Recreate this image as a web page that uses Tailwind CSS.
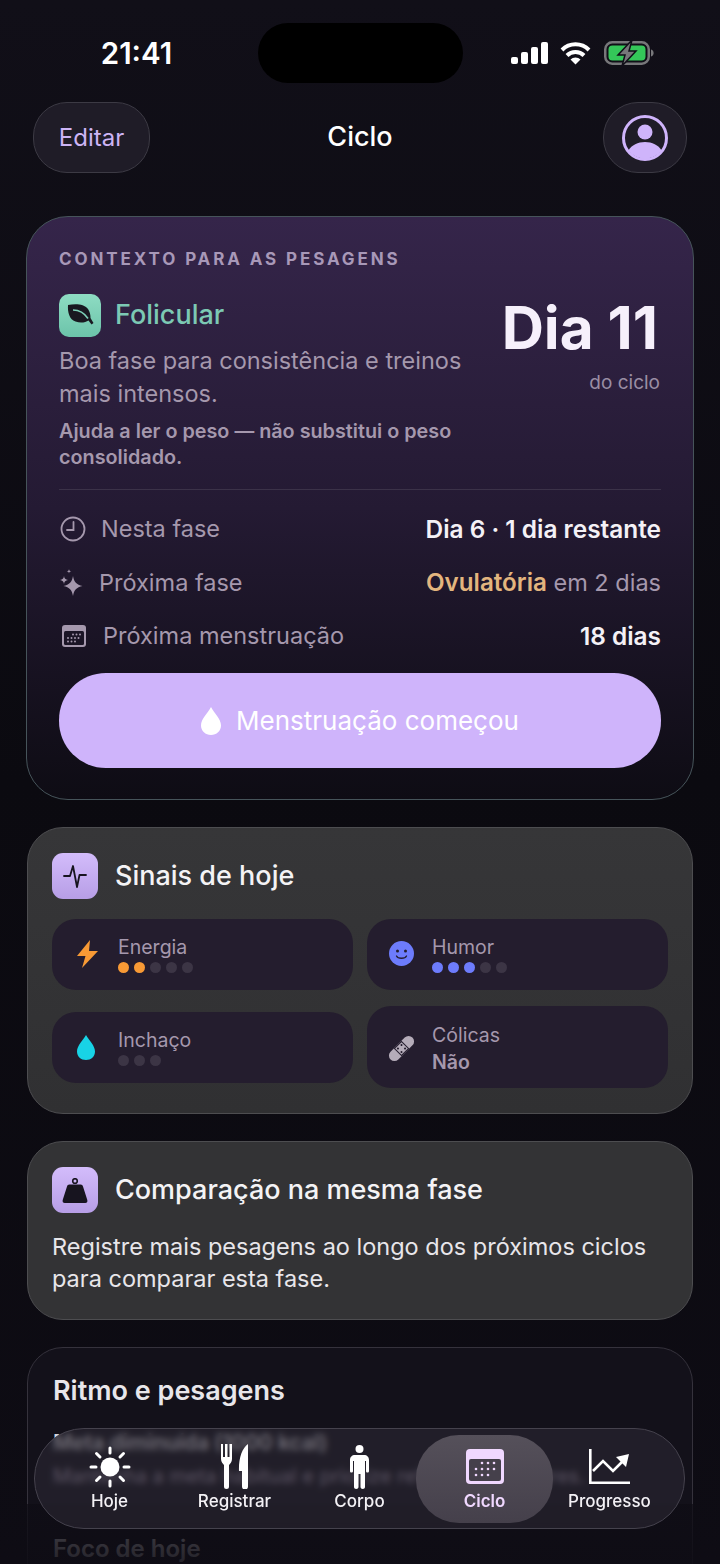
<!DOCTYPE html>
<html lang="pt-BR">
<head>
<meta charset="utf-8">
<script src="https://cdn.jsdelivr.net/npm/@tailwindcss/browser@4"></script>
</head>
<body class="m-0 bg-[#0b0a10]">
<div class="relative w-[720px] h-[1564px] overflow-hidden bg-gradient-to-b from-[#110f18] via-[#0b0a10] to-[#0e0c14] font-['Inter','Liberation_Sans',sans-serif] text-white">

  <!-- status bar -->
  <div class="grid grid-cols-[258px_205px_257px] pt-[23px] h-[83px]">
    <div class="flex items-center justify-center pl-[15px] text-[29.5px] font-semibold h-[60px]">21:41</div>
    <div class="h-[60px] rounded-[30px] bg-black"></div>
    <div class="flex items-center pl-[48px] gap-[12px] h-[60px]">
      <svg width="37" height="22" viewBox="0 0 37 22" fill="#fff"><rect x="0" y="15" width="7" height="7" rx="2"/><rect x="10" y="10" width="7" height="12" rx="2"/><rect x="20" y="5" width="7" height="17" rx="2"/><rect x="30" y="0" width="7" height="22" rx="2"/></svg>
      <svg width="31" height="23" viewBox="0 0 31 23" fill="none" stroke="#fff" stroke-width="4"><path d="M2 8 A19 19 0 0 1 29 8"/><path d="M7 13.5 A12 12 0 0 1 24 13.5"/><path d="M15.5 22.5 L10.5 17.5 A7 7 0 0 1 20.5 17.5 Z" fill="#fff" stroke="none"/></svg>
      <svg width="50" height="26" viewBox="0 -1 50 26" class="ml-[1px]"><rect x="1.25" y="1.25" width="43.5" height="21.5" rx="7" fill="none" stroke="#77777a" stroke-width="2.5"/><rect x="4.5" y="4.5" width="37" height="15" rx="4" fill="#34c759"/><path d="M47 8.5c2 .6 2.600 2 2.600 3.500s-.6 2.900-2.600 3.500z" fill="#77777a"/><path d="M28 -1 L14 14 H21 L18 25 L32 10 H25 Z" fill="#77777a" stroke="#110f18" stroke-width="1.500"/></svg>
    </div>
  </div>

  <!-- header -->
  <header class="mt-[19px] px-[33px] grid grid-cols-[1fr_auto_1fr] items-center h-[71px]">
    <button class="justify-self-start w-[117px] h-[71px] rounded-[34px] bg-[#1f1c27] border border-[#3c3a44] text-[#cdb4f5] text-[24px]">Editar</button>
    <h1 class="text-[27px] font-medium">Ciclo</h1>
    <button class="justify-self-end w-[84px] h-[71px] rounded-[35px] bg-[#1f1c27] border border-[#3c3a44] flex items-center justify-center">
      <svg width="46" height="46" viewBox="0 0 46 46"><circle cx="23" cy="23" r="21.5" fill="none" stroke="#cfb4fb" stroke-width="3"/><circle cx="23" cy="17" r="7.5" fill="#cfb4fb"/><path d="M6.500 35.500c3-5.500 9.500-8.500 16.500-8.500s13.500 3 16.500 8.500a21 21 0 0 1-33 0z" fill="#cfb4fb"/></svg>
    </button>
  </header>

  <main class="mt-[43px] px-[26px] flex flex-col gap-[27px]">
    <!-- context card -->
    <section class="h-[584px] rounded-[42px] border-[1.5px] border-[#46545a] bg-gradient-to-b from-[#35254a] via-[#241a33] to-[#0e0c14] px-[32px] pt-[32px]">
      <p class="text-[17px] leading-[20px] font-bold tracking-[0.17em] text-[#a898b8] whitespace-nowrap">CONTEXTO PARA AS PESAGENS</p>
      <div class="mt-[24px] flex justify-between">
        <div class="w-[420px]">
          <div class="flex items-center gap-[14px] h-[44px]">
            <div class="w-[42px] h-[43px] rounded-[10px] bg-gradient-to-b from-[#8edcc3] to-[#6cc4aa] flex items-center justify-center">
              <svg width="28" height="24" viewBox="0 0 28 24" fill="#191820"><path d="M2 2c8-1.500 16-1 20 4 2 3 2.500 6 2.500 9l3 5-2 1.500-3-4c-3 2-8 3-13 1-6-2-8-9-7.500-16.500z"/><path d="M7 7c5 0 11 2.500 15 8.500" fill="none" stroke="#7dd0b7" stroke-width="1.600"/></svg>
            </div>
            <span class="text-[27px] font-medium text-[#7cc9b4]">Folicular</span>
          </div>
          <p class="mt-[7px] text-[23.5px] leading-[33px] text-[#a598ad]">Boa fase para consistência e treinos mais intensos.</p>
          <p class="mt-[8px] text-[19.8px] leading-[26px] font-semibold text-[#a598ad]">Ajuda a ler o peso — não substitui o peso consolidado.</p>
        </div>
        <div class="text-right">
          <div class="text-[58.5px] leading-[70px] font-bold text-[#f6f0fb] whitespace-nowrap pr-[3px]">Dia 11</div>
          <div class="mt-[8px] pr-[1px] text-[19px] leading-[24px] text-[#9a8ea4]">do ciclo</div>
        </div>
      </div>
      <div class="mt-[19px] border-t border-white/10"></div>
      <div class="mt-[21px] flex items-center justify-between h-[36px]">
        <div class="flex items-center gap-[15px] pl-[1px] text-[23.5px] text-[#a598ad]">
          <svg width="26" height="26" viewBox="0 0 26 26" fill="none" stroke="#a598ad" stroke-width="1.800"><circle cx="13" cy="13" r="11.500"/><path d="M13.500 6v8H7" stroke-linecap="round"/></svg>
          <span>Nesta fase</span>
        </div>
        <span class="text-[24.400px] font-semibold text-[#f4f1f6]">Dia 6 · 1 dia restante</span>
      </div>
      <div class="mt-[18px] flex items-center justify-between h-[36px]">
        <div class="flex items-center gap-[15px] text-[23.5px] text-[#a598ad]">
          <svg width="25" height="28" viewBox="0 0 25 28" fill="#a598ad"><path d="M14 7c1 6 3.500 8.500 9.500 10-6 1.500-8.500 4-9.500 10-1-6-3.500-8.500-9.500-10 6-1.500 8.500-4 9.500-10z"/><path d="M5 7c.4 2.600 1.400 3.600 4 4-2.600.4-3.600 1.400-4 4-.4-2.600-1.400-3.600-4-4 2.600-.4 3.600-1.400 4-4z"/><path d="M10 0c.2 1.500.8 2.100 2.300 2.300C10.800 2.500 10.200 3.100 10 4.600 9.800 3.100 9.200 2.500 7.700 2.300 9.200 2.100 9.800 1.500 10 0z"/></svg>
          <span>Próxima fase</span>
        </div>
        <span class="text-[23.5px] text-[#a598ad]"><span class="text-[24.2px] font-semibold text-[#e3b57e]">Ovulatória</span> em 2 dias</span>
      </div>
      <div class="mt-[17px] flex items-center justify-between h-[36px]">
        <div class="flex items-center gap-[17px] pl-[3px] text-[23.5px] text-[#a598ad]">
          <svg width="24" height="22" viewBox="0 0 24 22"><rect x="0" y="0" width="24" height="22" rx="3" fill="#a598ad"/><rect x="2" y="6" width="20" height="14" rx="1.500" fill="#1b1526"/><g fill="#a598ad"><circle cx="11" cy="9.500" r="1"/><circle cx="14.500" cy="9.500" r="1"/><circle cx="18" cy="9.500" r="1"/><circle cx="6" cy="13" r="1"/><circle cx="9.500" cy="13" r="1"/><circle cx="13" cy="13" r="1"/><circle cx="16.500" cy="13" r="1"/><circle cx="6" cy="16.500" r="1"/><circle cx="9.500" cy="16.500" r="1"/><circle cx="13" cy="16.500" r="1"/></g></svg>
          <span>Próxima menstruação</span>
        </div>
        <span class="text-[24.400px] font-semibold text-[#f4f1f6]">18 dias</span>
      </div>
      <button class="mt-[19px] w-[602px] h-[95px] rounded-[47px] bg-[#cfb4fb] flex items-center justify-center gap-[15px] text-[26px] text-white">
        <svg width="20" height="28" viewBox="0 0 20 28" fill="#fff"><path d="M10 0C13 6 20 11.500 20 18.500 20 24 15.500 28 10 28S0 24 0 18.500C0 11.500 7 6 10 0z"/></svg>
        <span>Menstruação começou</span>
      </button>
    </section>

    <!-- sinais -->
    <section class="mx-[1px] rounded-[36px] border-[1.5px] border-[#4d4d50] bg-gradient-to-b from-[#363638] to-[#303032] px-[24px] pt-[25px] pb-[25px]">
      <div class="flex items-center gap-[17px]">
        <div class="w-[46px] h-[46px] rounded-[11px] bg-gradient-to-b from-[#d3bcfb] to-[#b79ee6] flex items-center justify-center">
          <svg width="26" height="26" viewBox="0 0 26 26" fill="none" stroke="#17141f" stroke-width="1.800" stroke-linejoin="round" stroke-linecap="round"><path d="M2 13h6l3-10 4 21 2.500-12h6.500"/></svg>
        </div>
        <h2 class="text-[27px] font-medium text-[#f4f3f5]">Sinais de hoje</h2>
      </div>
      <div class="mt-[20px] grid grid-cols-2 gap-x-[14px] gap-y-[16px] items-center">
        <div class="h-[71px] rounded-[24px] bg-[#241d2e] flex items-center pl-[25px] pb-[2px] gap-[20px]">
          <svg width="21" height="28" viewBox="0 0 21 28" fill="#f89a35"><path d="M13 0 L0 16 H8.500 L5 28 L21 11 H12 Z"/></svg>
          <div><div class="text-[19.5px] leading-[24px] text-[#a598ad]">Energia</div><div class="mt-[3px] flex gap-[5px]"><i class="w-[11px] h-[11px] rounded-full bg-[#f89a35]"></i><i class="w-[11px] h-[11px] rounded-full bg-[#f89a35]"></i><i class="w-[11px] h-[11px] rounded-full bg-[#3c3545]"></i><i class="w-[11px] h-[11px] rounded-full bg-[#3c3545]"></i><i class="w-[11px] h-[11px] rounded-full bg-[#3c3545]"></i></div></div>
        </div>
        <div class="h-[71px] rounded-[24px] bg-[#241d2e] flex items-center pl-[22px] pb-[2px] gap-[18px]">
          <svg width="25" height="25" viewBox="0 0 25 25"><circle cx="12.500" cy="12.500" r="12.500" fill="#6d7cfc"/><circle cx="8.500" cy="10" r="1.500" fill="#241d2e"/><circle cx="16.500" cy="10" r="1.500" fill="#241d2e"/><path d="M7.500 15c1.500 3 8.500 3 10 0" fill="none" stroke="#241d2e" stroke-width="1.300" stroke-linecap="round"/></svg>
          <div><div class="text-[19.5px] leading-[24px] text-[#a598ad]">Humor</div><div class="mt-[3px] flex gap-[5px]"><i class="w-[11px] h-[11px] rounded-full bg-[#6d7cfc]"></i><i class="w-[11px] h-[11px] rounded-full bg-[#6d7cfc]"></i><i class="w-[11px] h-[11px] rounded-full bg-[#6d7cfc]"></i><i class="w-[11px] h-[11px] rounded-full bg-[#3c3545]"></i><i class="w-[11px] h-[11px] rounded-full bg-[#3c3545]"></i></div></div>
        </div>
        <div class="h-[71px] rounded-[24px] bg-[#241d2e] flex items-center pl-[25px] gap-[23px]">
          <svg width="18" height="25" viewBox="0 0 18 25" fill="#18d3e6"><path d="M9 0C12 5.500 18 10.500 18 16.500 18 21.500 14 25 9 25S0 21.500 0 16.500C0 10.500 6 5.500 9 0z"/></svg>
          <div><div class="text-[19.5px] leading-[24px] text-[#a598ad]">Inchaço</div><div class="mt-[3px] flex gap-[5px]"><i class="w-[11px] h-[11px] rounded-full bg-[#3c3545]"></i><i class="w-[11px] h-[11px] rounded-full bg-[#3c3545]"></i><i class="w-[11px] h-[11px] rounded-full bg-[#3c3545]"></i></div></div>
        </div>
        <div class="h-[82px] rounded-[24px] bg-[#241d2e] flex items-center pl-[21px] pt-[2px] gap-[17px]">
          <svg width="27" height="27" viewBox="0 0 27 27"><g transform="rotate(-45 13.500 13.500)"><rect x="-2" y="8" width="31" height="11" rx="5.500" fill="#b5acb9"/><rect x="8" y="8" width="11" height="11" fill="#241d2e"/><rect x="9" y="9" width="9" height="9" fill="#b5acb9"/><g fill="#241d2e"><circle cx="11" cy="11" r="1"/><circle cx="16" cy="11" r="1"/><circle cx="11" cy="16" r="1"/><circle cx="16" cy="16" r="1"/></g></g></svg>
          <div><div class="text-[19.5px] leading-[24px] text-[#a598ad]">Cólicas</div><div class="mt-[3px] text-[19.5px] leading-[24px] font-semibold text-[#a598ad]">Não</div></div>
        </div>
      </div>
    </section>

    <!-- comparação -->
    <section class="mx-[1px] h-[179px] rounded-[36px] border-[1.5px] border-[#4d4d50] bg-[#333335] px-[24px] pt-[25px]">
      <div class="flex items-center gap-[17px]">
        <div class="w-[46px] h-[46px] rounded-[11px] bg-gradient-to-b from-[#d3bcfb] to-[#b79ee6] flex items-center justify-center">
          <svg width="26" height="25" viewBox="0 0 26 25" fill="#17141f"><circle cx="13" cy="3" r="2.300" fill="none" stroke="#17141f" stroke-width="1.600"/><path d="M7.500 6.500h11c1.500 0 2.200.8 2.500 2L25.300 22c.5 1.800-.5 3-2 3H2.700c-1.500 0-2.500-1.200-2-3L5 8.500c.3-1.200 1-2 2.500-2z"/></svg>
        </div>
        <h2 class="text-[27px] font-medium text-[#f4f3f5]">Comparação na mesma fase</h2>
      </div>
      <p class="mt-[18px] text-[23.5px] leading-[32px] text-[#e8e6ea]">Registre mais pesagens ao longo dos próximos ciclos para comparar esta fase.</p>
    </section>

    <!-- ritmo -->
    <section class="mx-[1px] h-[300px] rounded-[36px] border-[1.5px] border-[#35323c] bg-[#13111a] px-[25px] pt-[25px]">
      <h2 class="text-[27px] leading-[36px] font-semibold text-[#e8e6ea]">Ritmo e pesagens</h2>
      <p class="mt-[19px] text-[21px] leading-[30px] font-semibold text-[#d8d6da]">Meta diminuída (1000 kcal)</p>
      <p class="mt-[4px] text-[20px] leading-[28px] whitespace-nowrap text-[#a598ad]">Mantenha a meta habitual e priorize refeições regulares.</p>
      <h2 class="mt-[43px] text-[24px] leading-[32px] font-semibold text-[#e8e6ea]">Foco de hoje</h2>
    </section>
  </main>

  <!-- bottom fade -->
  <div class="absolute left-0 right-0 bottom-0 h-[60px] bg-gradient-to-b from-[#0e0c14]/70 to-[#0e0c14]/90 pointer-events-none"></div>

  <!-- tab bar -->
  <nav class="absolute left-[34px] top-[1428px] w-[651px] h-[101px] rounded-[50px] border-[1.5px] border-[#45424d] bg-[#2b2833]/60 backdrop-blur-[3px] grid grid-cols-5 px-[12px]">
    <div class="relative flex flex-col items-center">
      <div class="mt-[13px] h-[49px] flex items-center"><svg width="42" height="42" viewBox="0 0 42 42" fill="#fff" stroke="#fff" stroke-width="3" stroke-linecap="round"><circle cx="21" cy="21" r="9.500" stroke="none"/><path d="M21 2v5M21 35v5M2 21h5M35 21h5M7.500 7.500l3.500 3.500M31 31l3.500 3.500M34.500 7.500L31 11M11 31l-3.500 3.500"/></svg></div>
      <span class="text-[17px] leading-[20px] font-medium text-[#f3f1f5]">Hoje</span>
    </div>
    <div class="relative flex flex-col items-center">
      <div class="mt-[13px] h-[49px] flex items-center"><svg width="27" height="45" viewBox="0 0 27 45" fill="#fff"><path d="M0 0h2v13h2V0h2.500v13h2V0H11v15c0 3-2 5-3 6v21.500a2.500 2.500 0 0 1-5 0V21c-1-1-3-3-3-6z"/><path d="M27 0v42.500a2.500 2.500 0 0 1-6 0V27h-3c-.5-12 3-23 9-27z"/></svg></div>
      <span class="text-[17px] leading-[20px] font-medium text-[#f3f1f5]">Registrar</span>
    </div>
    <div class="relative flex flex-col items-center">
      <div class="mt-[13px] h-[49px] flex items-center"><svg width="19" height="44" viewBox="0 0 19 44" fill="#fff"><circle cx="9.500" cy="4" r="4"/><path d="M5 10h9c3 0 5 2 5 5v11c0 1-.6 1.500-1.500 1.500S16 27 16 26V16h-1v26c0 1.200-1 2-2.200 2S10.500 43.200 10.500 42V29h-2v13c0 1.200-1 2-2.300 2S4 43.200 4 42V16H3v10c0 1-.6 1.500-1.500 1.500S0 27 0 26V15c0-3 2-5 5-5z"/></svg></div>
      <span class="text-[17px] leading-[20px] font-medium text-[#f3f1f5]">Corpo</span>
    </div>
    <div class="relative flex flex-col items-center">
      <div class="absolute -left-[6px] -right-[6px] top-[6px] h-[88px] rounded-[43px] bg-gradient-to-b from-[#55505a] to-[#45404b]"></div>
      <div class="relative mt-[13px] h-[49px] flex items-center"><svg width="38" height="35" viewBox="0 0 38 35"><rect width="38" height="35" rx="4" fill="#f0d8ff"/><rect x="3" y="10" width="32" height="22" rx="2" fill="#45404b"/><g fill="#f0d8ff"><circle cx="16" cy="14" r="1.300"/><circle cx="22" cy="14" r="1.300"/><circle cx="28" cy="14" r="1.300"/><circle cx="10" cy="20" r="1.300"/><circle cx="16" cy="20" r="1.300"/><circle cx="22" cy="20" r="1.300"/><circle cx="28" cy="20" r="1.300"/><circle cx="10" cy="26" r="1.300"/><circle cx="16" cy="26" r="1.300"/><circle cx="22" cy="26" r="1.300"/></g></svg></div>
      <span class="relative text-[17px] leading-[20px] font-semibold text-[#f0d8ff]">Ciclo</span>
    </div>
    <div class="relative flex flex-col items-center">
      <div class="mt-[13px] h-[49px] flex items-center"><svg width="41" height="35" viewBox="0 0 41 35" fill="none" stroke="#fff" stroke-width="2.600"><path d="M1.300 0v33.700H41"/><path d="M4 22l10-10 10 10 9-9"/><path d="M40 5l-3 13-10-10z" fill="#fff" stroke="none"/></svg></div>
      <span class="text-[17px] leading-[20px] font-medium text-[#f3f1f5]">Progresso</span>
    </div>
  </nav>
</div>
</body>
</html>
